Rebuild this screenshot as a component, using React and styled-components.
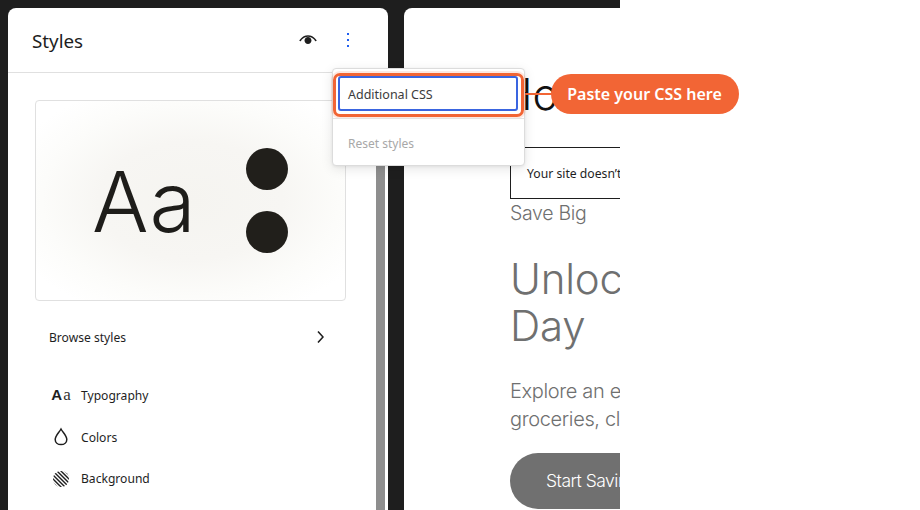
import React from "react";
import styled, { createGlobalStyle } from "styled-components";

const Global = createGlobalStyle`
  html, body { margin: 0; padding: 0; background: #fff; }
  * { box-sizing: border-box; }
`;

const UI = `"Noto Sans", "Open Sans", sans-serif`;
const ORANGE = "#f26535";

const Stage = styled.div`
  position: relative;
  width: 920px;
  height: 510px;
  overflow: hidden;
  background: #fff;
  font-family: ${UI};
`;
const Workspace = styled.div`
  width: 620px;
  height: 510px;
  padding: 8px 0 0 8px;
  display: flex;
  gap: 16px;
  background: #1e1e1e;
  overflow: hidden;
`;
const Sidebar = styled.aside`
  flex: 0 0 380px;
  height: 560px;
  display: flex;
  flex-direction: column;
  background: #fff;
  border-radius: 8px 8px 0 0;
`;
const Header = styled.header`
  flex: 0 0 65px;
  display: flex;
  align-items: center;
  padding: 0 28px 0 24px;
  border-bottom: 1px solid #e0e0e0;
`;
const Title = styled.h2`
  flex: 1;
  margin: 0;
  padding-top: 2px;
  font-size: 18.8px;
  font-weight: 400;
  color: #1e1e1e;
`;
const HeaderIcon = styled.svg`
  display: block;
  width: 24px;
  height: 24px;
  fill: ${(p) => p.$color || "#1e1e1e"};
`;
const HeaderIcons = styled.div`
  display: flex;
  gap: 16px;
  align-items: center;
  margin-top: -1px;
`;
const SidebarBody = styled.div`
  flex: 1;
  display: flex;
  min-height: 0;
`;
const SidebarContent = styled.div`
  flex: 1;
  padding: 27px 22px 0 27px;
`;
const Scrollbar = styled.div`
  flex: 0 0 9px;
  margin-right: 3px;
  background: #8e8e8e;
`;
const Preview = styled.div`
  width: 311px;
  height: 201px;
  display: flex;
  align-items: center;
  gap: 52px;
  padding: 0 0 0 56px;
  border: 1px solid #e0e0e0;
  border-radius: 4px;
  background: radial-gradient(ellipse at 50% 50%, #f5f4f0 0%, #f7f6f3 42%, #fcfcfa 68%, #fff 88%);
`;
const PreviewAa = styled.span`
  width: 102px;
  font-family: Inter, sans-serif;
  font-size: 84px;
  font-weight: 300;
  line-height: 1;
  letter-spacing: 1px;
  color: #1e1d1a;
  padding-top: 2px;
`;
const Dots = styled.div`
  display: flex;
  flex-direction: column;
  gap: 21px;
`;
const Dot = styled.span`
  display: block;
  width: 42px;
  height: 42px;
  border-radius: 50%;
  background: #211f1b;
`;
const BrowseRow = styled.div`
  display: flex;
  align-items: center;
  justify-content: space-between;
  height: 24px;
  margin-top: 24px;
  padding: 0 22px 0 14px;
  font-size: 12.1px;
  color: #1e1e1e;
`;
const Chevron = styled.svg`
  width: 24px;
  height: 24px;
  fill: #1e1e1e;
`;
const NavList = styled.ul`
  list-style: none;
  margin: 25px 0 0;
  padding: 0 0 0 16px;
`;
const NavItem = styled.li`
  display: flex;
  align-items: center;
  gap: 10px;
  height: ${(p) => p.$h}px;
  font-size: 12.1px;
  color: #1e1e1e;
`;
const NavIcon = styled.span`
  flex: 0 0 20px;
  height: 20px;
  display: flex;
  align-items: center;
  justify-content: center;
  color: #1e1e1e;
  line-height: 20px;
`;
const BoldA = styled.span`
  font-family: "Liberation Sans", sans-serif;
  font-size: 15px;
  font-weight: 700;
  margin-right: 1px;
`;
const SerifA = styled.span`
  font-family: "Liberation Serif", serif;
  font-size: 17px;
  font-weight: 400;
  color: #333;
`;

const Canvas = styled.main`
  flex: 1;
  min-width: 0;
  height: 560px;
  padding: 0 0 0 106px;
  background: #fff;
  border-radius: 8px 0 0 0;
  overflow: hidden;
  white-space: nowrap;
  font-family: Inter, sans-serif;
  font-weight: 300;
  color: #6f7070;
`;
const SiteTitle = styled.h1`
  margin: 60px 0 0 -10px;
  font-size: 44px;
  line-height: 52px;
  height: 79px;
  font-weight: 300;
  color: #111;
`;
const Notice = styled.div`
  width: 600px;
  height: 52px;
  display: flex;
  align-items: center;
  padding-left: 16px;
  border: 1px solid #1e1e1e;
  font-family: ${UI};
  font-size: 12.2px;
  font-weight: 400;
  color: #1e1e1e;
`;
const Eyebrow = styled.div`
  font-size: 19.5px;
  line-height: 28px;
  letter-spacing: -0.3px;
`;
const Headline = styled.div`
  margin-top: 28px;
  font-size: 42px;
  line-height: 47px;
  letter-spacing: -0.2px;
`;
const Lead = styled.div`
  margin-top: 28px;
  font-size: 20px;
  line-height: 28px;
  letter-spacing: -0.35px;
`;
const CTA = styled.div`
  width: 260px;
  height: 56px;
  margin-top: 20px;
  padding: 0 0 1px 36px;
  display: flex;
  align-items: center;
  border-radius: 28px;
  background: #707070;
  color: #fff;
  font-size: 17.5px;
  font-weight: 300;
  letter-spacing: -0.5px;
`;

const Menu = styled.div`
  position: absolute;
  left: 332px;
  top: 68px;
  width: 193px;
  height: 98px;
  padding: 4px 0 0 0;
  background: #fff;
  border: 1px solid #dcdcdc;
  border-radius: 4px;
  box-shadow: 0 3px 12px rgba(0, 0, 0, 0.1), 0 1px 3px rgba(0, 0, 0, 0.06);
  font-size: 12.5px;
`;
const Ring = styled.div`
  width: 191px;
  height: 44px;
  padding: 0 3px 3px 2px;
  border: 3px solid ${ORANGE};
  border-radius: 7px;
  box-shadow: 0 0 0 2px rgba(242, 101, 53, 0.14);
`;
const ActiveItem = styled.div`
  height: 35px;
  display: flex;
  align-items: center;
  padding: 1px 0 0 8px;
  border: 2px solid #3a65e0;
  border-radius: 3px;
  color: #3c3c3c;
`;
const MenuDivider = styled.div`
  height: 1px;
  margin: 1px 0 0;
  background: #e4e4e4;
`;
const DisabledItem = styled.div`
  height: 47px;
  display: flex;
  align-items: center;
  padding: 2px 0 0 15px;
  font-size: 12px;
  color: #a8a8a8;
`;
const Connector = styled.span`
  position: absolute;
  left: 524px;
  top: 93px;
  width: 30px;
  height: 2px;
  background: ${ORANGE};
`;
const Callout = styled.div`
  position: absolute;
  left: 551px;
  top: 74px;
  width: 188px;
  height: 40px;
  padding-right: 1px;
  display: flex;
  align-items: center;
  justify-content: center;
  border-radius: 20px;
  background: ${ORANGE};
  color: #fff;
  font-size: 16px;
  font-weight: 600;
`;

const EyeIcon = () => (
  <HeaderIcon viewBox="0 0 24 24">
    <path d="M3.99961 13C4.67043 13.3354 4.6703 13.3357 4.67017 13.3359L4.67298 13.3305C4.67621 13.3242 4.68184 13.3135 4.68988 13.2985C4.70595 13.2686 4.7316 13.2218 4.76695 13.1608C4.8377 13.0385 4.94692 12.8592 5.09541 12.6419C5.39312 12.2062 5.84436 11.624 6.45435 11.0431C7.67308 9.88241 9.49719 8.75 11.9996 8.75C14.502 8.75 16.3261 9.88241 17.5449 11.0431C18.1549 11.624 18.6061 12.2062 18.9038 12.6419C19.0523 12.8592 19.1615 13.0385 19.2323 13.1608C19.2676 13.2218 19.2933 13.2686 19.3093 13.2985C19.3174 13.3135 19.323 13.3242 19.3262 13.3305L19.3291 13.3359C19.3289 13.3357 19.3288 13.3354 19.9996 13C20.6704 12.6646 20.6703 12.6643 20.6701 12.664L20.6697 12.6632L20.6688 12.6614L20.6662 12.6563L20.6583 12.6408C20.6517 12.6282 20.6427 12.6108 20.631 12.5892C20.6078 12.5459 20.5744 12.4852 20.5306 12.4096C20.4432 12.2584 20.3141 12.0471 20.1423 11.7956C19.7994 11.2938 19.2819 10.626 18.5794 9.9569C17.1731 8.61759 15.0472 7.25 11.9996 7.25C8.95201 7.25 6.82614 8.61759 5.41987 9.9569C4.71736 10.626 4.19984 11.2938 3.85694 11.7956C3.68511 12.0471 3.55605 12.2584 3.4686 12.4096C3.42484 12.4852 3.39142 12.5459 3.36818 12.5892C3.35656 12.6108 3.34748 12.6282 3.34092 12.6408L3.33297 12.6563L3.33041 12.6614L3.32948 12.6632L3.32911 12.664C3.32894 12.6643 3.32879 12.6646 3.99961 13ZM11.9996 16C13.9326 16 15.4996 14.433 15.4996 12.5C15.4996 10.567 13.9326 9 11.9996 9C10.0666 9 8.49961 10.567 8.49961 12.5C8.49961 14.433 10.0666 16 11.9996 16Z" />
  </HeaderIcon>
);
const MoreIcon = () => (
  <HeaderIcon viewBox="0 0 24 24" $color="#1f5ff0">
    <path d="M13 19h-2v-2h2v2zm0-6h-2v-2h2v2zm0-6h-2V5h2v2z" />
  </HeaderIcon>
);
const DropIcon = () => (
  <svg width="20" height="20" viewBox="0 0 20 20" fill="none" stroke="#1e1e1e" strokeWidth="1.5">
    <path d="M10 2 C8.2 5.4 4.2 8.4 4.2 12.4 C4.2 15.6 6.8 17.6 10 17.6 C13.2 17.6 15.8 15.6 15.8 12.4 C15.8 8.4 11.8 5.4 10 2 Z" />
  </svg>
);
const BackgroundIcon = () => (
  <svg width="20" height="20" viewBox="0 0 20 20" fill="none">
    <clipPath id="bg-disc">
      <circle cx="10" cy="10" r="8" />
    </clipPath>
    <g clipPath="url(#bg-disc)" stroke="#1e1e1e" strokeWidth="1.4">
      {[-16, -12, -8, -4, 0, 4, 8, 12, 16].map((o) => (
        <line key={o} x1={o - 2} y1="-2" x2={o + 22} y2="22" />
      ))}
    </g>
  </svg>
);

export default function App() {
  return (
    <Stage>
      <Global />
      <Workspace>
        <Sidebar>
          <Header>
            <Title>Styles</Title>
            <HeaderIcons>
              <EyeIcon />
              <MoreIcon />
            </HeaderIcons>
          </Header>
          <SidebarBody>
            <SidebarContent>
              <Preview>
                <PreviewAa>Aa</PreviewAa>
                <Dots>
                  <Dot />
                  <Dot />
                </Dots>
              </Preview>
              <BrowseRow>
                <span>Browse styles</span>
                <Chevron viewBox="0 0 24 24">
                  <path d="M10.6 6L9.4 7l4.6 5-4.6 5 1.2 1 5.4-6z" />
                </Chevron>
              </BrowseRow>
              <NavList>
                <NavItem $h={42}>
                  <NavIcon>
                    <BoldA>A</BoldA>
                    <SerifA>a</SerifA>
                  </NavIcon>
                  Typography
                </NavItem>
                <NavItem $h={42}>
                  <NavIcon>
                    <DropIcon />
                  </NavIcon>
                  Colors
                </NavItem>
                <NavItem $h={41}>
                  <NavIcon>
                    <BackgroundIcon />
                  </NavIcon>
                  Background
                </NavItem>
              </NavList>
            </SidebarContent>
            <Scrollbar />
          </SidebarBody>
        </Sidebar>
        <Canvas>
          <SiteTitle>Home</SiteTitle>
          <Notice>Your site doesn’t have any menus</Notice>
          <Eyebrow>Save Big</Eyebrow>
          <Headline>
            Unlock Savings
            <br />
            Day
          </Headline>
          <Lead>
            Explore an exclusive range
            <br />
            groceries, clothing and more
          </Lead>
          <CTA>Start Saving</CTA>
        </Canvas>
      </Workspace>
      <Connector />
      <Menu>
        <Ring>
          <ActiveItem>Additional CSS</ActiveItem>
        </Ring>
        <MenuDivider />
        <DisabledItem>Reset styles</DisabledItem>
      </Menu>
      <Callout>Paste your CSS here</Callout>
    </Stage>
  );
}
